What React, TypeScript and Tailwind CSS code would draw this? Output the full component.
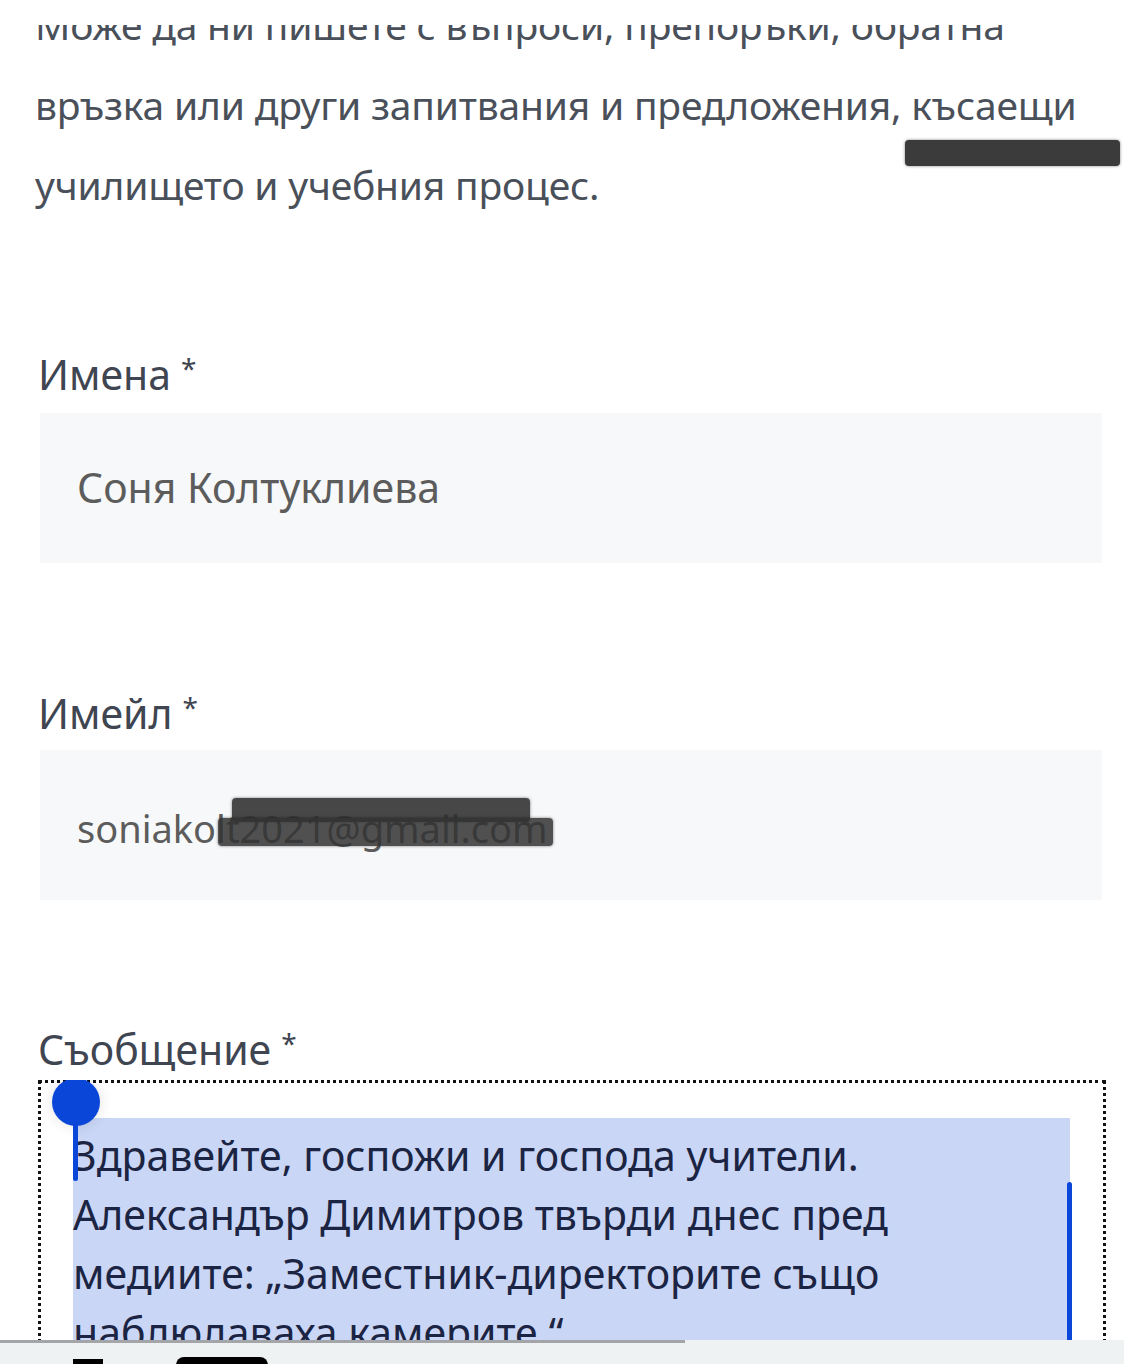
import React from "react";

const font = { fontFamily: '"Noto Sans", "Open Sans", sans-serif' };

function Label({ children }: { children: React.ReactNode }) {
  return (
    <div className="h-[52px] leading-[52px] text-[41px] text-[#3f4551] pl-[38px] whitespace-nowrap">
      {children}
      <span className="align-top text-[28px] leading-[40px] ml-[10px]">*</span>
    </div>
  );
}

export default function App() {
  return (
    <div
      lang="bg"
      style={font}
      className="w-[1124px] h-[1364px] overflow-hidden bg-white flex flex-col"
    >
      {/* top paragraph, clipped at top */}
      <div className="mt-[25px] h-[200px] overflow-hidden shrink-0 relative">
        <div className="-mt-[40px] pl-[35px] text-[39px] tracking-[-0.2px] leading-[80px] text-[#4a505a] whitespace-nowrap">
          <div>Може да ни пишете с въпроси, препоръки, обратна</div>
          <div>връзка или други запитвания и предложения, късаещи</div>
          <div>училището и учебния процес.</div>
        </div>
        <div className="absolute left-[905px] top-[115px] w-[215px] h-[26px] rounded-[4px] bg-[#3b3b3b] shadow-[0_0_3px_rgba(0,0,0,0.5)]" />
      </div>

      <div className="mt-[123px] shrink-0">
        <Label>Имена</Label>
      </div>
      <div className="mt-[13px] ml-[40px] w-[1062px] h-[150px] bg-[#f7f8f9] flex items-center pl-[37px] text-[41px] text-[#5c5c5c] shrink-0">
        Соня Колтуклиева
      </div>

      <div className="mt-[124px] shrink-0">
        <Label>Имейл</Label>
      </div>
      <div className="mt-[11px] ml-[40px] w-[1062px] h-[150px] bg-[#f7f8f9] flex items-center pl-[37px] text-[38px] text-[#5c5c5c] shrink-0">
        <div className="relative mt-[6px]">
          soniakolt2021@gmail.com
          <div className="absolute left-[155px] top-[-2px] w-[298px] h-[24px] rounded-[4px] bg-[#333]/90 shadow-[0_0_3px_rgba(0,0,0,0.5)]" />
          <div className="absolute left-[141px] top-[18px] w-[335px] h-[28px] rounded-[4px] bg-[#333]/85 shadow-[0_0_3px_rgba(0,0,0,0.5)]" />
        </div>
      </div>

      <div className="mt-[123px] shrink-0">
        <Label>Съобщение</Label>
      </div>

      <div className="flex-1 min-h-0 mt-[5px] overflow-hidden">
        <div className="relative ml-[38px] w-[1068px] h-[600px] border-[3px] border-dotted border-[#111] pt-[35px] pl-[32px] pr-[33px]">
          <div className="bg-[#c9d6f5] pt-[8px] text-[41px] leading-[59px] text-[#1b2442] whitespace-nowrap h-[560px]">
            <div>Здравейте, госпожи и господа учители.</div>
            <div>Александър Димитров твърди днес пред</div>
            <div>медиите: „Заместник-директорите също</div>
            <div>наблюдаваха камерите.“</div>
          </div>
          {/* selection handles */}
          <div className="absolute left-[11px] top-[-5px] w-[48px] h-[48px] rounded-full bg-[#0a47d9] shadow-[0_0_14px_rgba(0,0,0,0.12)]" />
          <div className="absolute left-[32px] top-[18px] w-[5px] h-[80px] rounded-b-full bg-[#0a47d9]" />
          <div className="absolute left-[1026px] top-[99px] w-[5px] h-[300px] rounded-t-full bg-[#0a47d9]" />
        </div>
      </div>

      {/* bottom bar */}
      <div className="h-[24px] shrink-0 bg-[#eff2f3] relative">
        <div className="h-[3px] w-[685px] bg-[#a3a5a8]" />
        <div className="absolute left-[73px] top-[19px] w-[30px] h-[8px] bg-black" />
        <div className="absolute left-[176px] top-[17px] w-[92px] h-[12px] rounded-t-[8px] bg-black" />
      </div>
    </div>
  );
}
